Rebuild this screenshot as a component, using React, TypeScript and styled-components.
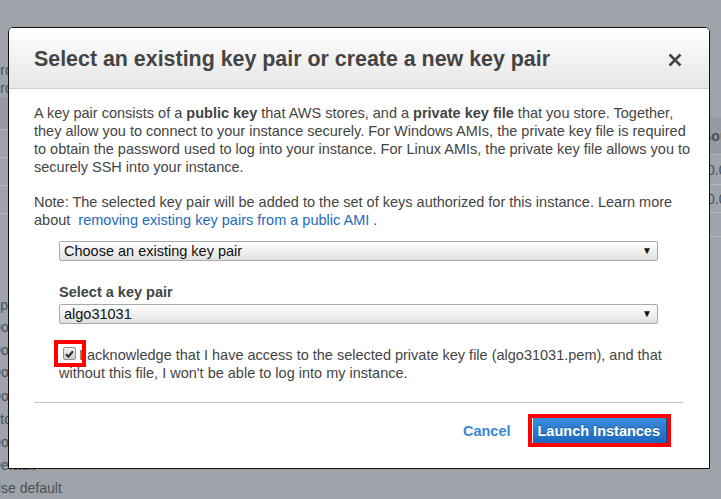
import React from "react";
import styled, { createGlobalStyle } from "styled-components";

const Global = createGlobalStyle`
  html, body { margin: 0; padding: 0; }
  body {
    width: 721px; height: 499px; overflow: hidden;
    font-family: "Liberation Sans", Arial, sans-serif;
    background: #9ea4aa;
  }
`;

const Page = styled.div`
  position: relative;
  width: 721px;
  height: 499px;
  overflow: hidden;
  background: #9ea4aa;
`;

const Backdrop = styled.div`
  display: flex;
  justify-content: space-between;
  width: 721px;
  height: 499px;
  color: #4b5056;
  font-size: 14px;
`;

const BgColumn = styled.div`
  width: 60px;
  display: flex;
  flex-direction: column;
  align-items: stretch;
`;

const BgRow = styled.div<{ $h: number; $band?: boolean; $line?: boolean; $bold?: boolean; $shift?: number }>`
  height: ${(p) => p.$h}px;
  line-height: ${(p) => p.$h}px;
  background: ${(p) => (p.$band ? "#959ba1" : "transparent")};
  border-bottom: ${(p) => (p.$line ? "1px solid #b2b7bc" : "none")};
  box-sizing: border-box;
  white-space: nowrap;
  font-weight: ${(p) => (p.$bold ? 700 : 400)};
  text-indent: ${(p) => p.$shift ?? 0}px;
`;

const Modal = styled.div`
  position: absolute;
  left: 8px;
  top: 27px;
  width: 702px;
  height: 442px;
  box-sizing: border-box;
  border: 1px solid #111;
  border-radius: 5px 5px 0 0;
  background: #fff;
  display: flex;
  flex-direction: column;
  color: #444;
`;

const Header = styled.div`
  height: 61px;
  box-sizing: border-box;
  border-bottom: 1px solid #cfcfcf;
  border-radius: 4px 4px 0 0;
  background: linear-gradient(#ffffff, #e6e6e6);
  display: flex;
  align-items: center;
  justify-content: space-between;
  padding: 3px 27px 0 25px;
`;

const Title = styled.h1`
  margin: 0;
  font-size: 21.4px;
  font-weight: 700;
  color: #444;
`;

const CloseBtn = styled.button`
  border: 0;
  background: transparent;
  padding: 0;
  width: 14px;
  height: 14px;
  display: flex;
  cursor: pointer;
`;

const Body = styled.div`
  padding: 15px 26px 0 25px;
  font-size: 14.5px;
  line-height: 18px;
  display: flex;
  flex-direction: column;
  flex: 1;
`;

const Para = styled.p<{ $mb?: number }>`
  margin: 0 -12px ${(p) => p.$mb ?? 0}px 0;
`;

const Link = styled.a`
  color: #1e6bbd;
  text-decoration: none;
`;

const Form = styled.div`
  padding: 0 25px;
  display: flex;
  flex-direction: column;
`;

const SelectBox = styled.div<{ $mb?: number }>`
  height: 20px;
  box-sizing: border-box;
  border: 1px solid #a9a9a9;
  border-radius: 2px;
  background: linear-gradient(#ffffff, #e1e1e1);
  display: flex;
  align-items: center;
  justify-content: space-between;
  padding: 0 5px 0 4px;
  color: #111;
  font-size: 14.5px;
  margin-bottom: ${(p) => p.$mb ?? 0}px;
`;

const Arrow = styled.span`
  font-size: 10px;
  color: #111;
  line-height: 1;
`;

const Label = styled.div`
  font-weight: 700;
  margin-bottom: 3px;
  margin-top: 1px;
`;

const AckRow = styled.div`
  position: relative;
  margin: 22px -14px 0 0;
  text-indent: 20px;
  line-height: 18px;
`;

const CheckWrap = styled.span`
  position: absolute;
  left: -5px;
  top: -6px;
  width: 32px;
  height: 27px;
  box-sizing: border-box;
  border: 4px solid #ff0000;
  display: flex;
  align-items: center;
  padding-left: 5px;
  text-indent: 0;
`;

const Checkbox = styled.span`
  width: 13px;
  height: 13px;
  box-sizing: border-box;
  border: 1px solid #8f8f8f;
  border-radius: 2px;
  background: linear-gradient(#f2f2f2, #cdcdcd);
  display: flex;
  align-items: center;
  justify-content: center;
`;

const Divider = styled.hr`
  border: 0;
  border-top: 1px solid #c4c4c4;
  margin: 20px 0 0 0;
`;

const Footer = styled.div`
  display: flex;
  justify-content: flex-end;
  align-items: center;
  gap: 17px;
  margin-top: 11px;
  padding-right: 12px;
`;

const CancelBtn = styled.button`
  border: 0;
  background: transparent;
  font-family: inherit;
  font-size: 14.5px;
  font-weight: 700;
  color: #3a87d6;
  padding: 0;
  cursor: pointer;
`;

const LaunchOutline = styled.div`
  border: 4px solid #ff0000;
  padding: 0 0 0 1px;
  display: flex;
`;

const LaunchBtn = styled.button`
  border: 0;
  border-right: 1px solid #0f4c8f;
  height: 25px;
  padding: 0 6px 0 5px;
  background: linear-gradient(#3a8ddf, #1b67bd);
  color: #fff;
  font-family: inherit;
  font-size: 14.5px;
  font-weight: 700;
  text-shadow: 0 -1px 0 rgba(0, 0, 0, 0.3);
  cursor: pointer;
`;

export default function App() {
  return (
    <Page>
      <Global />
      <Backdrop>
        <BgColumn>
          <BgRow $h={62} />
          <BgRow $h={17} $shift={-9}>Pro</BgRow>
          <BgRow $h={18} $shift={-9}>Pro</BgRow>
          <BgRow $h={33} $band $line />
          <BgRow $h={28} $line />
          <BgRow $h={28} $line />
          <BgRow $h={28} $line />
          <BgRow $h={80} />
          <BgRow $h={22} $shift={-9}>Spo</BgRow>
          <BgRow $h={23} $shift={-9}>Do</BgRow>
          <BgRow $h={22} $shift={-9}>Do</BgRow>
          <BgRow $h={23} $shift={-9}>Do</BgRow>
          <BgRow $h={24} $shift={-9}>Do</BgRow>
          <BgRow $h={23} $shift={-9}>Sto</BgRow>
          <BgRow $h={22} $shift={-9}>Do</BgRow>
          <BgRow $h={24} $shift={-9}>Default</BgRow>
          <BgRow $h={22} $shift={-9}>Use default</BgRow>
        </BgColumn>
        <BgColumn>
          <BgRow $h={117} />
          <BgRow $h={38} $band $line $bold $shift={41}>Sou</BgRow>
          <BgRow $h={30} $line $shift={46}>0.0</BgRow>
          <BgRow $h={28} $line $shift={46}>0.0</BgRow>
          <BgRow $h={24} $line />
        </BgColumn>
      </Backdrop>

      <Modal role="dialog">
        <Header>
          <Title>Select an existing key pair or create a new key pair</Title>
          <CloseBtn aria-label="Close">
            <svg width="14" height="14" viewBox="0 0 14 14">
              <path d="M1.5 1.5 L12.5 12.5 M12.5 1.5 L1.5 12.5" stroke="#444" strokeWidth="2.6" strokeLinecap="butt" />
            </svg>
          </CloseBtn>
        </Header>
        <Body>
          <Para $mb={17}>
            A key pair consists of a <b>public key</b> that AWS stores, and a <b>private key file</b> that you store. Together,
            <br />
            they allow you to connect to your instance securely. For Windows AMIs, the private key file is required
            <br />
            to obtain the password used to log into your instance. For Linux AMIs, the private key file allows you to
            <br />
            securely SSH into your instance.
          </Para>
          <Para $mb={12}>
            Note: The selected key pair will be added to the set of keys authorized for this instance. Learn more
            <br />
            about&nbsp; <Link href="#">removing existing key pairs from a public AMI</Link> .
          </Para>
          <Form>
            <SelectBox $mb={21}>
              <span>Choose an existing key pair</span>
              <Arrow>▼</Arrow>
            </SelectBox>
            <Label>Select a key pair</Label>
            <SelectBox>
              <span>algo31031</span>
              <Arrow>▼</Arrow>
            </SelectBox>
            <AckRow>
              I acknowledge that I have access to the selected private key file (algo31031.pem), and that
              <br />
              without this file, I won't be able to log into my instance.
              <CheckWrap>
                <Checkbox>
                  <svg width="9" height="8" viewBox="0 0 9 8">
                    <path d="M1 4.2 L3.4 6.6 L8 1.2" stroke="#333" strokeWidth="2.2" fill="none" />
                  </svg>
                </Checkbox>
              </CheckWrap>
            </AckRow>
          </Form>
          <Divider />
          <Footer>
            <CancelBtn>Cancel</CancelBtn>
            <LaunchOutline>
              <LaunchBtn>Launch Instances</LaunchBtn>
            </LaunchOutline>
          </Footer>
        </Body>
      </Modal>
    </Page>
  );
}
